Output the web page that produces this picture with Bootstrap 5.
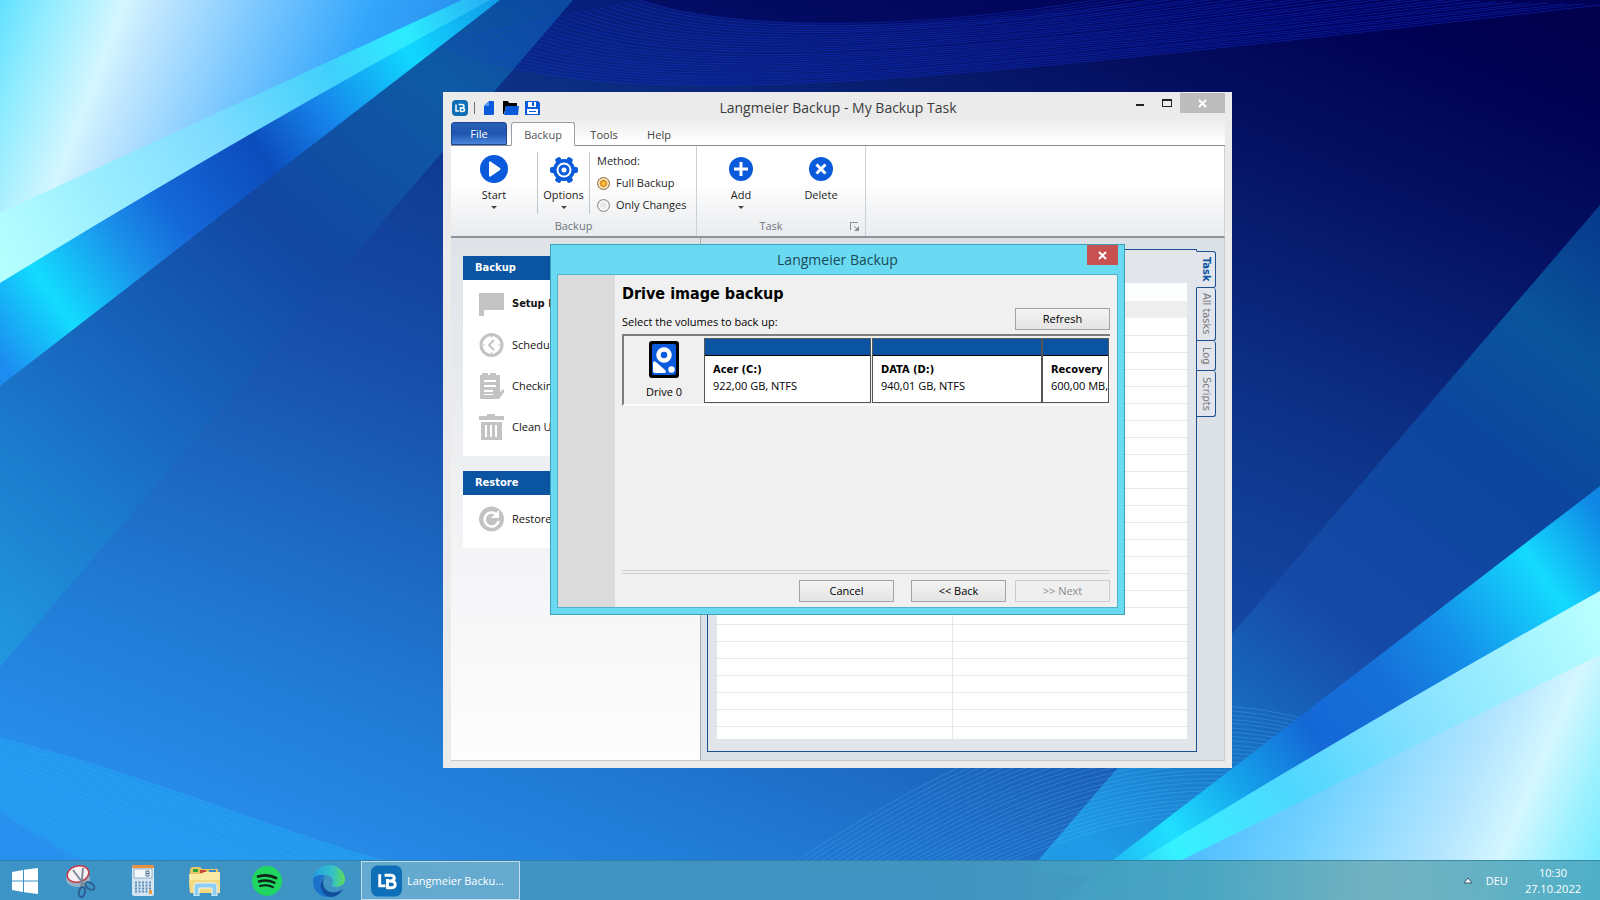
<!DOCTYPE html>
<html lang="en">
<head>
<meta charset="utf-8">
<meta name="viewport" content="width=device-width, initial-scale=1">
<title>Langmeier Backup</title>
<link href="https://cdn.jsdelivr.net/npm/bootstrap@5.3.0/dist/css/bootstrap.min.css" rel="stylesheet">
<style>
  :root { --ui: "Open Sans", "Noto Sans", sans-serif; --dlg: "DejaVu Sans Condensed", "DejaVu Sans", sans-serif; --navy: #0a54a1; --blue: #0a5bdc; }
  body { font-family: var(--ui); font-size: 11px; line-height: 16px; color: #1e1e1e; overflow: hidden; background: #1c66bd; }
  svg { display: block; flex: none; }
  .wallpaper { position: absolute; inset: 0; width: 100%; height: 100%; }
  .desk { min-height: 100vh; position: relative; }
  .win { position: absolute; }
  .btn { font-size: 11px; line-height: 16px; border-radius: 0; padding: 0; }

  /* main window */
  .win-main { left: 443px; top: 92px; width: 789px; height: 676px; background: #ebebeb; padding: 0 7px 7px 8px; }
  .title-row { height: 26px; position: relative; }
  .win-title { font-size: 14px; line-height: 32px; color: #3c3c3c; }
  .quick { gap: 6px; padding: 5px 0 0 1px; height: 26px; z-index: 1; }
  .quick .btn svg { width: 16px; height: 16px; }
  .caption-btns { position: absolute; right: 0; top: 1px; }
  .caption-btns .btn { height: 20px; width: 27px; display: flex; align-items: center; justify-content: center; border: 0; }
  .caption-btns .btn.x-main { width: 45px; background: #bcbcbc; }
  .tab-row { height: 28px; padding-top: 4px; border-bottom: 1px solid #8a8f94; background: linear-gradient(#ebebeb, #fff 90%); }
  .tab-row .nav-link { height: 23px; line-height: 24px; padding: 0; color: #444; font-size: 11px; border: 1px solid transparent; border-radius: 3px 3px 0 0; text-align: center; margin: 0; }
  .tab-row .nav-link.file { width: 56px; color: #fff; background: linear-gradient(#2b62b8, #1f55ae 50%, #4a86dc); border-color: #1b478f; line-height: 22px; margin-right: 4px; }
  .tab-row .nav-link.active { width: 64px; height: 24px; background: #fff; border-color: #9a9fa5; border-bottom-color: #fff; color: #555; }
  .tab-row .nav-link.plain { width: 58px; }
  .tab-row .nav-link.plain.last { width: 52px; }
  .ribbon { height: 93px; background: linear-gradient(#fff 40%, #e9ebee); border-bottom: 2px solid #8e9399; border-right: 1px solid #cfd3d7; }
  .grp { border-right: 1px solid #cdd1d6; position: relative; }
  .grp-name { color: #6d7580; height: 20px; line-height: 20px; text-align: center; }
  .tool { width: 80px; color: #1e1e1e; border: 0; display: flex; flex-direction: column; align-items: center; }
  .tool svg.big { width: 32px; height: 32px; margin-bottom: 1px; }
  .tool .caret { width: 0; height: 0; border: 3px solid transparent; border-top-color: #444; border-bottom: 0; margin-top: 3px; }
  .vline { width: 1px; background: #c3c7cc; height: 62px; margin-top: 6px; }
  .method { padding: 7px 0 0 7px; }
  .method .heading { margin-bottom: 3px; }
  .method .form-check { min-height: 22px; height: 22px; margin: 0; padding: 0; display: flex; align-items: center; gap: 6px; }
  .method .form-check-input { float: none; margin: 0; width: 13px; height: 13px; border: 1px solid #8d8d8d; background: radial-gradient(#e8e8e8 40%, #fff 55%, #ccc 75%); box-shadow: none; }
  .method .form-check-input:checked { border-color: #8a6a3c; background: radial-gradient(#ffc24a 15%, #d9870f 42%, #fff3df 56%, #d9b98a 80%); }
  .launch { position: absolute; right: 5px; bottom: 4px; border: 0; }

  .work { background: #dce1e7; border-right: 1px solid #ccc; border-bottom: 1px solid #c4c8cc; min-height: 0; }
  .side { width: 250px; flex: none; padding: 18px 12px; color: #111; background: linear-gradient(#dfe3e7, #f3f4f6 60%, #fdfdfd); border-right: 1px solid #a6adb5; }
  .side h2 { font: bold 11px/24px var(--dlg); color: #fff; background: var(--navy); padding-left: 12px; margin: 0; }
  .side .list-group { background: #fff; border-radius: 0; padding: 3px 0 9px; margin-bottom: 15px; }
  .side .list-group-item { background: none; border: 0; padding: 0 0 0 16px; height: 41px; display: flex; align-items: center; gap: 8px; color: #111; white-space: nowrap; overflow: hidden; }
  .side .list-group-item.fw-bold { font-family: var(--dlg); }
  .side .list-group-item svg { width: 25px; height: 26px; fill: #c3c3c3; }
  .content-pane { padding: 11px 8px 8px 6px; }
  .sheet { border: 1px solid #1b4f8f; background: #e2e5ea; padding: 33px 9px 12px 9px; min-width: 0; }
  .sheet .holder { background: #fff; height: 100%; overflow: hidden; }
  .sheet table { width: 100%; table-layout: fixed; border-collapse: collapse; }
  .sheet td, .sheet th { height: 17px; padding: 0; border-bottom: 1px solid #e6e8ea; }
  .sheet td + td { border-left: 1px solid #e6e8ea; }
  .sheet thead th { border: 0; background: #fcfdfd; height: 18px; }
  .sheet .sect td { background: #eee; border: 0; }
  .vtabs { width: 20px; margin-left: -1px; padding-top: 2px; }
  .vtabs .btn { writing-mode: vertical-rl; width: 20px; border: 1px solid #1b4f8f; border-top: 0; background: #e2e6ec; color: #777; font-family: var(--dlg); line-height: 18px; border-radius: 0 3px 3px 0; text-align: center; }
  .vtabs .btn.on { border-top: 1px solid #1b4f8f; border-left-color: #e2e5ea; color: var(--navy); font-weight: bold; height: 37px; }
  .h-all { height: 53px; } .h-log { height: 30px; } .h-scr { height: 46px; }

  /* dialog */
  .win-dlg { left: 550px; top: 244px; width: 575px; height: 371px; background: #6adaf2; border: 1px solid #3f9fb4; padding: 0 6px 6px; color: #000; }
  .win-dlg .bar { height: 29px; position: relative; }
  .win-dlg .win-title { line-height: 30px; color: #1b4a58; }
  .x-dlg { position: absolute; right: 0; top: 0; width: 31px; height: 20px; background: #c75050; border: 0; display: flex; align-items: center; justify-content: center; }
  .win-dlg .inner { border: 1px solid #4fb3c9; background: #f0f0f0; min-height: 0; }
  .strip { width: 57px; background: #dbdbdb; }
  .dlg-main { padding: 7px 7px 5px; min-width: 0; }
  .dlg-main h1 { font: bold 16px/24px var(--dlg); margin: 0; }
  .w-btn { width: 95px; height: 22px; border: 1px solid #a3a3a3; background: linear-gradient(#f4f4f4, #e4e4e4); color: #000; line-height: 20px; }
  .w-btn:disabled { color: #8c8c8c; border-color: #ccc; background: #efefef; opacity: 1; }
  .drives { height: 72px; border-top: 2px solid #7d7d7d; border-left: 2px solid #7d7d7d; border-bottom: 2px solid #fdfdfd; margin-top: 4px; overflow: hidden; padding: 2px 1px 0 0; }
  .drive { width: 80px; flex: none; padding-top: 3px; gap: 6px; }
  .vol { border: 1px solid #555; background: #fff; height: 65px; flex: none; display: flex; flex-direction: column; text-align: left; color: #000; white-space: nowrap; overflow: hidden; }
  .vol .cap { height: 17px; flex: none; align-self: stretch; background: var(--navy); border-bottom: 1px solid #000; margin-bottom: 6px; }
  .vol b, .vol span.info { padding-left: 8px; }
  .vol b { font-family: var(--dlg); }
  .rule { border-top: 1px solid #d0d0d0; border-bottom: 1px solid #d0d0d0; height: 4px; }
  .dlg-actions { padding-top: 6px; }
  .dlg-actions .back { margin: 0 9px 0 17px; }

  /* taskbar */
  .taskbar { position: relative; height: 40px; color: #fff; border-top: 1px solid rgba(40,110,150,.6); background: linear-gradient(90deg, rgba(62,148,196,.95), rgba(66,150,192,.95) 60%, rgba(72,164,190,.93) 75%, rgba(112,176,190,.95) 86%, rgba(76,172,196,.95)); }
  .pins .btn { width: 62px; height: 39px; display: flex; align-items: center; justify-content: center; border: 0; }
  .pins .btn.start { width: 50px; }
  .pins .btn.task { width: 159px; border: 1px solid rgba(255,255,255,.6); background: rgba(255,255,255,.2); color: #fff; gap: 5px; justify-content: flex-start; padding-left: 9px; margin-left: 1px; }
  .tray { gap: 13px; padding-right: 19px; }
  .tray .clock { line-height: 16px; text-align: center; }
</style>
</head>
<body>
<main class="desk d-flex flex-column justify-content-end">
  <svg class="wallpaper" viewBox="0 0 1600 900" preserveAspectRatio="none" aria-hidden="true">
    <defs>
      <linearGradient id="base" gradientUnits="userSpaceOnUse" x1="1300" y1="-100" x2="820" y2="1100">
        <stop offset="0" stop-color="#00004c"/><stop offset=".06" stop-color="#000052"/><stop offset=".19" stop-color="#051263"/><stop offset=".38" stop-color="#0d3389"/><stop offset=".6" stop-color="#174fac"/><stop offset=".72" stop-color="#1c66bf"/><stop offset=".85" stop-color="#217cd6"/><stop offset="1" stop-color="#2890ee"/>
      </linearGradient>
      <linearGradient id="fanL" gradientUnits="userSpaceOnUse" x1="540" y1="0" x2="0" y2="650">
        <stop offset="0" stop-color="#0b4aa0"/><stop offset=".15" stop-color="#0f5aa4"/><stop offset=".4" stop-color="#1147a2"/><stop offset=".65" stop-color="#1765bd"/><stop offset="1" stop-color="#2197e0"/>
      </linearGradient>
      <linearGradient id="fanR" gradientUnits="userSpaceOnUse" x1="1600" y1="220" x2="1120" y2="860">
        <stop offset="0" stop-color="#063a8c"/><stop offset=".15" stop-color="#0a559c"/><stop offset=".32" stop-color="#0c459e"/><stop offset=".6" stop-color="#164aa8"/><stop offset=".8" stop-color="#1872c4"/><stop offset="1" stop-color="#1f9ae6"/>
      </linearGradient>
      <linearGradient id="ribL" gradientUnits="userSpaceOnUse" x1="0" y1="360" x2="500" y2="0">
        <stop offset="0" stop-color="#1c8cf0"/><stop offset=".13" stop-color="#12dcff"/><stop offset=".27" stop-color="#1a90ea"/><stop offset=".37" stop-color="#1467d8"/><stop offset=".54" stop-color="#0c4cbc"/><stop offset=".66" stop-color="#1683ea"/><stop offset=".83" stop-color="#10d8ff"/><stop offset="1" stop-color="#109ae8"/>
      </linearGradient>
      <linearGradient id="ribR" gradientUnits="userSpaceOnUse" x1="1600" y1="510" x2="1110" y2="870">
        <stop offset="0" stop-color="#0f86e4"/><stop offset=".14" stop-color="#14daff"/><stop offset=".32" stop-color="#1490ea"/><stop offset=".45" stop-color="#1670d8"/><stop offset=".6" stop-color="#1468d6"/><stop offset=".75" stop-color="#15a5ec"/><stop offset=".88" stop-color="#1fe0ff"/><stop offset="1" stop-color="#20b8f4"/>
      </linearGradient>
      <linearGradient id="hemL" gradientUnits="userSpaceOnUse" x1="0" y1="260" x2="480" y2="0">
        <stop offset="0" stop-color="#b6ffff"/><stop offset=".45" stop-color="#7fdcff"/><stop offset=".7" stop-color="#3fd0fb"/><stop offset=".85" stop-color="#2cecff"/><stop offset="1" stop-color="#28b4f4"/>
      </linearGradient>
      <linearGradient id="hemR" gradientUnits="userSpaceOnUse" x1="1600" y1="620" x2="1130" y2="880">
        <stop offset="0" stop-color="#b8ffff"/><stop offset=".4" stop-color="#84e0ff"/><stop offset=".65" stop-color="#4fd6ff"/><stop offset=".9" stop-color="#35f2ff"/><stop offset="1" stop-color="#30c8f8"/>
      </linearGradient>
      <linearGradient id="sheetL" gradientUnits="userSpaceOnUse" x1="-30" y1="30" x2="390" y2="190">
        <stop offset="0" stop-color="#4fdcff"/><stop offset=".14" stop-color="#90ecff"/><stop offset=".3" stop-color="#d4f6ff"/><stop offset=".37" stop-color="#c0e6ff"/><stop offset=".58" stop-color="#7cc8ff"/><stop offset=".82" stop-color="#33a6fb"/><stop offset="1" stop-color="#2a92f0"/>
      </linearGradient>
      <linearGradient id="sheetR" gradientUnits="userSpaceOnUse" x1="1640" y1="880" x2="1220" y2="700">
        <stop offset="0" stop-color="#55e6ff"/><stop offset=".18" stop-color="#9bf1ff"/><stop offset=".3" stop-color="#d4f7ff"/><stop offset=".42" stop-color="#b6e6ff"/><stop offset=".7" stop-color="#74d2ff"/><stop offset="1" stop-color="#44b8ff"/>
      </linearGradient>
    </defs>
    <rect width="1600" height="900" fill="url(#base)"/>
    <path d="M430 0V40C600 120 900 85 1600 5V0Z" fill="#0010a0" opacity=".15"/>
    <path d="M640 0C740 35 950 30 1150 0Z" fill="#000050" opacity=".5"/>
    <path d="M573 0L0 667V380L500 0Z" fill="url(#fanL)"/>
    <path d="M1600 205L1030 870L1100 880L1600 500Z" fill="url(#fanR)"/>
    <path d="M0 738C150 775 270 830 400 865H90C60 850 40 835 0 812Z" fill="#22a0f2" opacity=".65"/>
    <g id="threads" fill="none" stroke-width="1"></g>
    <path d="M0 386L500 0H480L0 270Z" fill="url(#ribL)"/>
    <path d="M0 283Q250 130 490 0H455L0 210Z" fill="url(#hemL)"/>
    <path d="M0 0H462L0 213Z" fill="url(#sheetL)"/>
    <path d="M1600 486L1061 900H1120L1600 600Z" fill="url(#ribR)"/>
    <path d="M1600 591Q1340 736 1075 900H1140L1600 660Z" fill="url(#hemR)"/>
    <path d="M1600 655L1100 900H1600Z" fill="url(#sheetR)"/>
  </svg>

  <section class="win win-main d-flex flex-column" aria-label="Langmeier Backup - My Backup Task">
    <div class="title-row">
      <div class="win-title text-center position-absolute w-100">Langmeier Backup - My Backup Task</div>
      <div class="quick d-flex align-items-center position-relative">
        <svg width="16" height="16" viewBox="0 0 32 32"><rect width="32" height="32" rx="8" fill="#0c6fb7"/><g fill="none" stroke="#fff" stroke-width="3"><path d="M8 9v13h6M17 14v9M13 9h7q4 0 4 3.500t-4 3.500h-3M20 16q5 0 5 3.500t-5 3.500h-3"/></g></svg>
        <span class="border-start border-secondary" style="height:12px"></span>
        <button class="btn border-0" aria-label="New"><svg viewBox="0 0 16 16"><path d="M8 1h4q1 0 1 1v12l-1 1H3V6z" fill="#0a5bdc"/><path d="M8 1v5H3z" fill="#5c9bf5"/></svg></button>
        <button class="btn border-0" aria-label="Open"><svg viewBox="0 0 16 16"><path d="M0 1h5l1 2h8v3H3L1 14H0z" fill="#000"/><path d="M3 6h13l-1 9H1z" fill="#0a5bdc"/></svg></button>
        <button class="btn border-0" aria-label="Save"><svg viewBox="0 0 16 16"><path d="M0 1h13l2 2v12H0z" fill="#0a5bdc"/><path d="M3 2h8v5H3zM2 9h11v5H2z" fill="#fff"/><path d="M7 2h2v4H7zM4 11h7v1H4z" fill="#0a5bdc"/></svg></button>
      </div>
      <div class="caption-btns d-flex">
        <button class="btn" aria-label="Minimize"><svg width="10" height="10"><path d="M1 6h8v2H1z" fill="#222"/></svg></button>
        <button class="btn" aria-label="Maximize"><svg width="10" height="10"><path d="M0 1h10v8H0zM1 3v5h8V3z" fill="#222" fill-rule="evenodd"/></svg></button>
        <button class="btn x-main" aria-label="Close"><svg width="9" height="9"><path d="M1 1l7 7M8 1L1 8" stroke="#fff" stroke-width="2"/></svg></button>
      </div>
    </div>
    <nav class="nav nav-tabs tab-row">
      <a class="nav-link file" href="#">File</a>
      <a class="nav-link active" href="#" aria-current="page">Backup</a>
      <a class="nav-link plain" href="#">Tools</a>
      <a class="nav-link plain last" href="#">Help</a>
    </nav>
    <div class="ribbon d-flex">
      <div class="grp d-flex flex-column justify-content-between">
        <div class="d-flex">
          <button class="btn tool pt-2" style="width:86px"><svg class="big" viewBox="0 0 32 32"><circle cx="16" cy="15" r="14" fill="#0a5bdc"/><path d="M11 8.500v13q0 1.500 1.500 1L22 16q1-1 0-2l-9.500-6.500q-1.500-.500-1.500 1z" fill="#fff"/></svg>Start<span class="caret"></span></button>
          <div class="vline"></div>
          <button class="btn tool pt-2" style="width:51px"><svg class="big" viewBox="0 0 32 32"><g fill="#0a5bdc"><circle cx="16" cy="16" r="11"/><rect x="2" y="13" width="28" height="6" rx="2"/><rect x="2" y="13" width="28" height="6" rx="2" transform="rotate(60 16 16)"/><rect x="2" y="13" width="28" height="6" rx="2" transform="rotate(120 16 16)"/></g><circle cx="16" cy="16" r="7.500" fill="#fff"/><circle cx="16" cy="16" r="4" fill="#fff" stroke="#0a5bdc" stroke-width="3"/></svg>Options<span class="caret"></span></button>
          <div class="vline"></div>
          <div class="method" style="width:106px">
            <div class="heading">Method:</div>
            <div class="form-check"><input class="form-check-input" type="radio" name="method" id="m1" checked><label for="m1">Full Backup</label></div>
            <div class="form-check"><input class="form-check-input" type="radio" name="method" id="m2"><label for="m2">Only Changes</label></div>
          </div>
        </div>
        <div class="grp-name">Backup</div>
      </div>
      <div class="grp d-flex flex-column justify-content-between" style="width:169px">
        <div class="d-flex ps-1">
          <button class="btn tool pt-2"><svg class="big" viewBox="0 0 32 32"><circle cx="16" cy="15" r="12" fill="#0a5bdc"/><path d="M16 8v14M9 15h14" stroke="#fff" stroke-width="3"/></svg>Add<span class="caret"></span></button>
          <button class="btn tool pt-2"><svg class="big" viewBox="0 0 32 32"><circle cx="16" cy="15" r="12" fill="#0a5bdc"/><path d="M11.500 10.500l9 9M20.500 10.500l-9 9" stroke="#fff" stroke-width="3"/></svg>Delete</button>
        </div>
        <div class="grp-name pe-3 me-1">Task</div>
        <button class="btn launch" aria-label="Task settings"><svg width="10" height="10"><path d="M0 8V0h8v1H1v7zM9 4v5H4z" fill="#8b9097"/><path d="M4 4l3 3" stroke="#8b9097"/></svg></button>
      </div>
    </div>
    <div class="work d-flex flex-grow-1">
      <aside class="side">
        <h2>Backup</h2>
        <div class="list-group">
          <a href="#" class="list-group-item fw-bold"><svg viewBox="0 0 25 26"><path d="M0 2h25v17H5v6H0z"/></svg>Setup Backup</a>
          <a href="#" class="list-group-item"><svg viewBox="0 0 25 26"><circle cx="12.500" cy="13" r="10.500" fill="none" stroke="#c3c3c3" stroke-width="3"/><path d="M15 8l-5 5 5 5" fill="none" stroke="#c3c3c3" stroke-width="2"/><path d="M12 4h1v2h-1zM12 20h1v2h-1zM4 12.500h2v1H4zM19 12.500h2v1h-2z"/></svg>Schedule</a>
          <a href="#" class="list-group-item"><svg viewBox="0 0 25 26"><path fill-rule="evenodd" d="M1 2h2V0h6v2h2V0h6v2h4v17l3-3 2 2-6 8H1zM5 7v2h12V7zM5 12v2h12v-2zM5 17v2h9v-2zM5 21v1h9v-1z"/></svg>Checking</a>
          <a href="#" class="list-group-item"><svg viewBox="0 0 25 26"><path fill-rule="evenodd" d="M0 2h8V0h8v2h9v4H0zM2 8h21v18H2zM6 11v12h2V11zM11 11v12h2V11zM16 11v12h2V11z"/></svg>Clean Up</a>
        </div>
        <h2>Restore</h2>
        <div class="list-group">
          <a href="#" class="list-group-item"><svg viewBox="0 0 25 26"><circle cx="12.500" cy="13" r="12.500"/><path d="M18 9a7 7 0 1 0 1.500 6" fill="none" stroke="#fff" stroke-width="2.500"/><path d="M20 4v8h-8z" fill="#fff"/></svg>Restore</a>
        </div>
      </aside>
      <div class="content-pane d-flex flex-grow-1">
        <div class="sheet flex-grow-1">
          <div class="holder">
            <table aria-label="Task properties"><thead><tr><th></th><th></th></tr></thead><tbody id="rows"><tr class="sect"><td></td><td></td></tr></tbody></table>
          </div>
        </div>
        <div class="vtabs d-flex flex-column">
          <button class="btn on">Task</button><button class="btn h-all">All tasks</button><button class="btn h-log">Log</button><button class="btn h-scr">Scripts</button>
        </div>
      </div>
    </div>
  </section>

  <section class="win win-dlg d-flex flex-column" role="dialog" aria-label="Langmeier Backup">
    <div class="bar">
      <div class="win-title text-center">Langmeier Backup</div>
      <button class="btn x-dlg" aria-label="Close dialog"><svg width="9" height="9"><path d="M1 1l7 7M8 1L1 8" stroke="#fff" stroke-width="2"/></svg></button>
    </div>
    <div class="inner d-flex flex-grow-1">
      <div class="strip"></div>
      <div class="dlg-main d-flex flex-column flex-grow-1">
        <h1>Drive image backup</h1>
        <div class="d-flex justify-content-between align-items-end pt-1" style="margin-top:-2px">
          <span>Select the volumes to back up:</span>
          <button class="btn w-btn">Refresh</button>
        </div>
        <div class="drives d-flex">
          <div class="drive d-flex flex-column align-items-center">
            <svg width="30" height="37" viewBox="0 0 30 37"><rect width="30" height="37" rx="3" fill="#000"/><rect x="3" y="3" width="24" height="31" rx="2" fill="#0a5bdc"/><circle cx="15" cy="14" r="5.500" fill="none" stroke="#fff" stroke-width="4.500"/><path d="M4 22q0-3 3-1l9 8q2 2 0 3H6q-2 0-2-2z" fill="#fff"/><circle cx="22.500" cy="28.500" r="3.200" fill="#fff"/></svg>
            <span>Drive 0</span>
          </div>
          <button class="btn vol" style="width:167px"><span class="cap"></span><b>Acer (C:)</b><span class="info">922,00 GB, NTFS</span></button>
          <button class="btn vol" style="width:170px;margin-left:1px"><span class="cap"></span><b>DATA (D:)</b><span class="info">940,01 GB, NTFS</span></button>
          <button class="btn vol flex-fill"><span class="cap"></span><b>Recovery</b><span class="info">600,00 MB,</span></button>
        </div>
        <div class="mt-auto rule"></div>
        <div class="dlg-actions d-flex justify-content-end">
          <button class="btn w-btn">Cancel</button>
          <button class="btn w-btn back">&lt;&lt; Back</button>
          <button class="btn w-btn" disabled>&gt;&gt; Next</button>
        </div>
      </div>
    </div>
  </section>

  <footer class="taskbar d-flex justify-content-between align-items-center">
    <div class="pins d-flex">
      <button class="btn start" aria-label="Start"><svg width="26" height="26" viewBox="0 0 26 26" fill="#fff"><path d="M0 4l11-2v10.500H0zM12 1.800L26 0v12.500H12zM0 13.500h11V24L0 22zM12 13.500h14V26l-14-1.800z"/></svg></button>
      <button class="btn" aria-label="Snipping Tool"><svg width="32" height="34" viewBox="0 0 32 34"><ellipse cx="13" cy="15" rx="12" ry="8" fill="#a9b6c4" opacity=".8"/><ellipse cx="13" cy="10" rx="11" ry="8" fill="#f6f1f4" stroke="#c63a4a" stroke-width="1.500" transform="rotate(-15 13 10)"/><path d="M8 6l12 16M18 4l-2 22" stroke="#7c8a98" stroke-width="2"/><g fill="none" stroke="#2a5f92" stroke-width="2"><ellipse cx="25" cy="22" rx="5" ry="3" transform="rotate(35 25 22)"/><ellipse cx="17" cy="28" rx="3" ry="5" transform="rotate(15 17 28)"/></g></svg></button>
      <button class="btn" aria-label="Calculator"><svg width="22" height="31" viewBox="0 0 22 31"><rect width="22" height="31" rx="2" fill="#d5e4f1"/><path d="M0 2q0-2 2-2h18q2 0 2 2v1H0z" fill="#e7903c"/><rect x="2" y="4" width="18" height="9" fill="#f4f8fb" stroke="#8fb0cc"/><path d="M14 6h3v5h-3zM14 8.500h3" fill="none" stroke="#4e6f90"/><g stroke="#5b8dbb" stroke-width="2" stroke-dasharray="2 1.500"><path d="M3 17.500h16M3 20.500h16M3 23.500h16M3 26.500h13"/></g><path d="M17 25h3v4h-3z" fill="#e7a03c"/></svg></button>
      <button class="btn" aria-label="File Explorer"><svg width="32" height="30" viewBox="0 0 32 30"><path d="M1 3l2-2h8l2 2h16v5l2 1v18H1z" fill="#e5c566"/><path d="M4 3h5v3H4z" fill="#2fa33c"/><path d="M11 4h6v3h-6z" fill="#c74a35"/><path d="M20 4h7v3h-7z" fill="#3c87c9"/><path d="M0 8h12l3-2h16v21H1z" fill="#fbe9a6"/><path d="M0 14h31l-1 13H1z" fill="#f5d97f"/><path d="M5 30V20q0-3 3-3h17q3 0 3 3v10h-5v-8H10v8z" fill="#8fcdf0" stroke="#e8f6fd"/></svg></button>
      <button class="btn" aria-label="Spotify"><svg width="30" height="30" viewBox="0 0 30 30"><circle cx="15" cy="15" r="15" fill="#1fd760"/><g fill="none" stroke="#10231a" stroke-linecap="round"><path d="M6 10.500q10-3 18 1.500" stroke-width="2.800"/><path d="M7 15.500q8-2.500 15.500 1.300" stroke-width="2.400"/><path d="M8 20q7-2 13 1.200" stroke-width="2"/></g></svg></button>
      <button class="btn" aria-label="Edge"><svg width="32" height="32" viewBox="0 0 32 32"><defs><linearGradient id="e1"><stop offset="0" stop-color="#1f9de0"/><stop offset=".6" stop-color="#35c1c9"/><stop offset="1" stop-color="#5fdc5a"/></linearGradient></defs><path d="M0 14C1 6 8 0 16 0c9 0 16 7 16 14 0 5-4 8-9 8-4 0-5-2-4-3 3-5-1-9-7-9C6 10 1 12 0 14z" fill="url(#e1)"/><path d="M0 14c2-4 8-5 12-3-4 2-5 6-4 10 1 6 6 10 11 10.500C8 34 0 26 0 16z" fill="#1a72cc"/><path d="M12 12c-4 4-2 14 6 15 5 1 9-1 12-3-2 4-6 7.500-11 8C11 32 6 24 8 18c1-3 2-5 4-6z" fill="#124f9f"/></svg></button>
      <button class="btn task"><svg width="31" height="32" viewBox="0 0 32 32"><rect width="32" height="32" rx="7" fill="#0c6fb7"/><g fill="none" stroke="#fff" stroke-width="3"><path d="M9 9v12h6M17 14v10M14 10h6q4 0 4 3t-4 3h-3M20 16q5 0 5 3.500t-5 3.500h-4"/></g></svg>Langmeier Backu...</button>
    </div>
    <div class="tray d-flex align-items-center">
      <svg width="10" height="8"><path d="M5 1l4 5H1z" fill="#fff" stroke="#365a6c"/></svg>
      <span>DEU</span>
      <time class="clock ms-1">10:30<br>27.10.2022</time>
    </div>
  </footer>
</main>
<script>
  // Empty property rows of the task sheet
  document.getElementById('rows').insertAdjacentHTML('beforeend', '<tr><td></td><td></td></tr>'.repeat(26));

  // Fine thread bundles of the wallpaper: each bundle blends one cubic curve into another
  const bundles = [
    { from: [430,40,600,120,900,85,1600,5], to: [640,0,740,35,950,30,1150,-10], n: 26, color: '#1838e0', o: .4 },
    { from: [0,738,150,775,270,830,400,865], to: [0,812,40,835,60,850,90,870], n: 16, color: '#45b4ff', o: .2 },
    { from: [790,865,950,760,1180,630,1400,760], to: [990,870,1100,825,1200,780,1430,860], n: 26, color: '#5cc8ff', o: .25 }
  ];
  const g = document.getElementById('threads');
  for (const b of bundles) for (let i = 0; i <= b.n; i++) {
    const p = b.from.map((v, k) => Math.round(v + (b.to[k] - v) * i / b.n));
    const path = document.createElementNS('http://www.w3.org/2000/svg', 'path');
    path.setAttribute('d', `M${p[0]} ${p[1]}C${p.slice(2).join(' ')}`);
    path.setAttribute('stroke', b.color);
    path.setAttribute('opacity', b.o);
    g.append(path);
  }
</script>
<script src="https://cdn.jsdelivr.net/npm/bootstrap@5.3.0/dist/js/bootstrap.bundle.min.js"></script>
</body>
</html>
